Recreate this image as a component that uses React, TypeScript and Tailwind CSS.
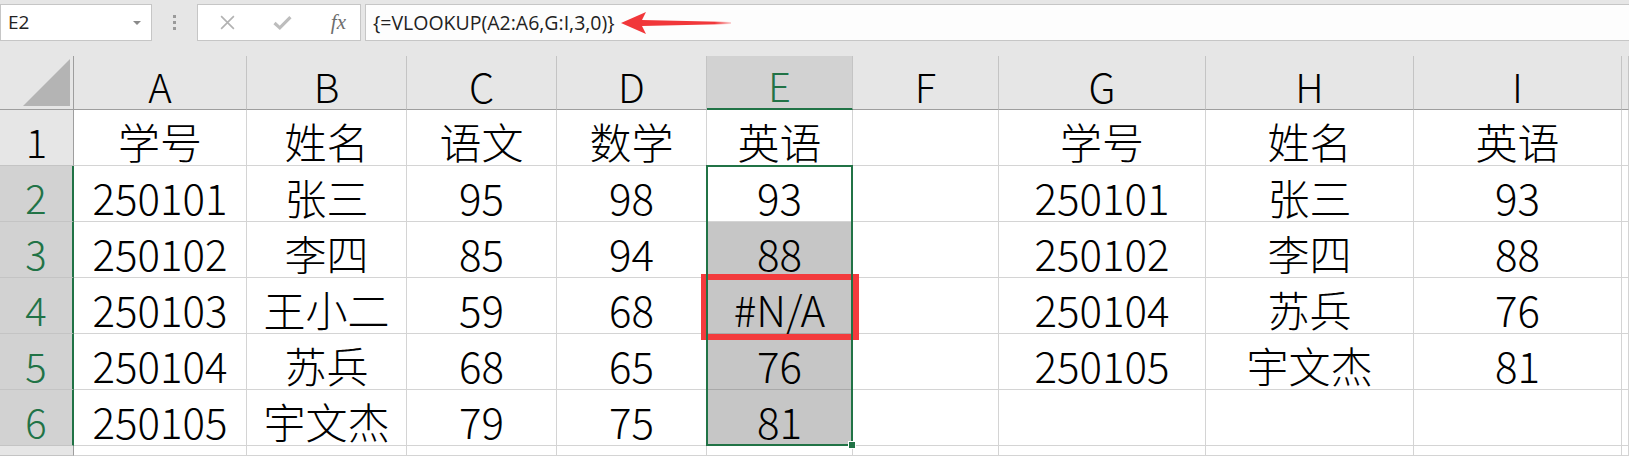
const cols = ["A", "B", "C", "D", "E", "F", "G", "H", "I", ""];

const rows: string[][] = [
  ["学号", "姓名", "语文", "数学", "英语", "", "学号", "姓名", "英语", ""],
  ["250101", "张三", "95", "98", "93", "", "250101", "张三", "93", ""],
  ["250102", "李四", "85", "94", "88", "", "250102", "李四", "88", ""],
  ["250103", "王小二", "59", "68", "#N/A", "", "250104", "苏兵", "76", ""],
  ["250104", "苏兵", "68", "65", "76", "", "250105", "宇文杰", "81", ""],
  ["250105", "宇文杰", "79", "75", "81", "", "", "", "", ""],
  ["", "", "", "", "", "", "", "", "", ""],
];

const font = "font-['Noto_Sans_CJK_SC','Liberation_Sans',sans-serif] font-light";
const gridTpl =
  "grid grid-cols-[74px_173px_160px_150px_150px_146px_146px_207px_208px_208px_1fr] grid-rows-[54px_repeat(6,56px)_10px]";

function FormulaBar() {
  return (
    <div className="h-[56px] flex items-start pt-[4px] bg-[#e6e6e6] font-['Open_Sans','Noto_Sans',sans-serif] font-normal">
      <div className="w-[152px] h-[37px] bg-white border border-[#c6c6c6] flex items-center justify-between pl-[7px] pr-[10px] text-[19px] text-[#222]">
        <span>E2</span>
        <span className="w-0 h-0 border-l-[4px] border-r-[4px] border-t-[4px] border-l-transparent border-r-transparent border-t-[#8a8a8a]" />
      </div>
      <div className="w-[45px] h-[37px] flex flex-col items-center justify-center gap-[3px]">
        <span className="w-[3px] h-[3px] bg-[#9a9a9a]" />
        <span className="w-[3px] h-[3px] bg-[#9a9a9a]" />
        <span className="w-[3px] h-[3px] bg-[#9a9a9a]" />
      </div>
      <div className="w-[164px] h-[37px] bg-white border border-[#c6c6c6] flex items-center justify-between pl-[21px] pr-[14px]">
        <svg width="17" height="17" viewBox="0 0 16 16" className="text-[#b2b2b2]">
          <path d="M2 2 L14 14 M14 2 L2 14" stroke="currentColor" strokeWidth="1.5" />
        </svg>
        <svg width="22" height="17" viewBox="0 0 20 16" className="text-[#bdbdbd]">
          <path d="M2 8.5 L7 13 L17 3" stroke="currentColor" strokeWidth="3" fill="none" />
        </svg>
        <span className="font-['Liberation_Serif',serif] italic text-[21px] text-[#6e6e6e] leading-none">
          fx
        </span>
      </div>
      <div className="w-[4px]" />
      <div className="flex-1 h-[37px] bg-[#fdfdfd] border border-[#c6c6c6] border-r-0 flex items-center pl-[7px] text-[19.5px] text-[#222]">
        <span>{"{=VLOOKUP(A2:A6,G:I,3,0)}"}</span>
        <svg width="112" height="24" viewBox="0 0 112 24" className="ml-[6px]">
          <defs>
            <linearGradient id="tail" x1="0" x2="1" y1="0" y2="0">
              <stop offset="0" stopColor="#f1373a" />
              <stop offset="0.85" stopColor="#f1373a" />
              <stop offset="1" stopColor="#f1373a" stopOpacity="0.2" />
            </linearGradient>
          </defs>
          <path d="M0 12 L25 1 L21 9 L110 11 L110 13 L21 15 L25 23 Z" fill="url(#tail)" />
        </svg>
      </div>
    </div>
  );
}

function Sheet() {
  return (
    <div className={gridTpl}>
      <div className="bg-[#e6e6e6] border-r border-b border-[#9e9e9e] flex items-end justify-end pr-[3px] pb-[3px]">
        <svg width="47" height="47" viewBox="0 0 47 47">
          <path d="M47 0 L47 47 L0 47 Z" fill="#b4b4b4" />
        </svg>
      </div>
      {cols.map((c, i) => {
        const sel = c === "E";
        return (
          <div
            key={"h" + i}
            className={`flex items-center justify-center pt-[6px] text-[40px] leading-none border-r border-r-[#c4c4c4] ${
              sel
                ? "bg-[#d2d2d2] text-[#217346] border-b-2 border-b-[#217346]"
                : "bg-[#e6e6e6] text-black border-b border-b-[#9e9e9e]"
            }`}
          >
            {c}
          </div>
        );
      })}
      {rows.map((r, ri) => {
        const n = ri + 1;
        const selRow = n >= 2 && n <= 6;
        return [
          <div
            key={"r" + ri}
            className={`flex items-center justify-center pt-[6px] text-[40px] leading-none border-b border-b-[#c4c4c4] ${
              selRow
                ? "bg-[#d2d2d2] text-[#217346] border-r-2 border-r-[#217346]"
                : "bg-[#e6e6e6] text-black border-r border-r-[#9e9e9e]"
            }`}
          >
            {n <= 6 ? n : ""}
          </div>,
          ...r.map((v, ci) => {
            const filled = ci === 4 && n >= 3 && n <= 6;
            return (
              <div
                key={ri + "-" + ci}
                className={`flex items-center justify-center pt-[6px] text-[42px] leading-none text-black border-r border-b ${
                  filled ? "bg-[#c6c6c6] border-[#a9a9a9]" : "bg-white border-[#d4d4d4]"
                }`}
              >
                {v}
              </div>
            );
          }),
        ];
      })}
    </div>
  );
}

function Overlay() {
  return (
    <div className={`${gridTpl} pointer-events-none`}>
      {/* selection E2:E6 */}
      <div className="col-start-6 row-start-3 row-end-8 -ml-[1px] -mt-[1px] border-2 border-[#217346] relative">
        <div className="absolute -right-[5px] -bottom-[5px] w-[8px] h-[8px] bg-[#217346] border border-white" />
      </div>
      {/* red highlight on E4 */}
      <div className="col-start-6 row-start-5 -mx-[6px] -mt-[4px] -mb-[6px] border-[6px] border-[#f33b3d]" />
    </div>
  );
}

export default function App() {
  return (
    <div className={`w-[1629px] h-[456px] overflow-hidden bg-white ${font}`}>
      <FormulaBar />
      <div className="grid">
        <div className="[grid-area:1/1]">
          <Sheet />
        </div>
        <div className="[grid-area:1/1]">
          <Overlay />
        </div>
      </div>
    </div>
  );
}
